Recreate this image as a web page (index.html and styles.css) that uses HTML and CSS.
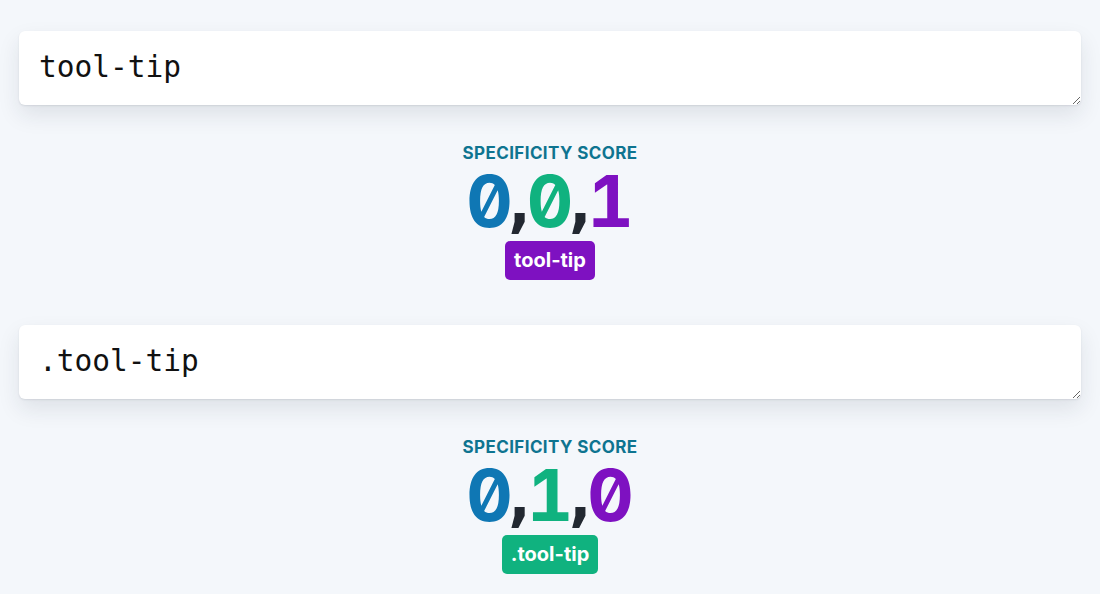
FILE: index.html
```html
<!DOCTYPE html>
<html lang="en">
<head>
    <meta charset="UTF-8">
    <meta name="viewport" content="width=device-width, initial-scale=1.0">
    <title>Specificity Calculator</title>
    <link rel="stylesheet" href="styles.css">
</head>
<body>

    <!-- Eerste selector -->
    <div class="selector-block">
        <textarea class="selector-input" spellcheck="false">tool-tip</textarea>
        <div class="result">
            <div class="result-label">Specificity score</div>
            <div class="score">
                <span class="digit ids">0</span><span class="comma">,</span><span class="digit classes">0</span><span class="comma">,</span><span class="digit elements">1</span>
            </div>
            <span class="badge badge-element">tool-tip</span>
        </div>
    </div>

    <!-- Tweede selector -->
    <div class="selector-block">
        <textarea class="selector-input" spellcheck="false">.tool-tip</textarea>
        <div class="result">
            <div class="result-label">Specificity score</div>
            <div class="score">
                <span class="digit ids">0</span><span class="comma">,</span><span class="digit classes">1</span><span class="comma">,</span><span class="digit elements">0</span>
            </div>
            <span class="badge badge-class">.tool-tip</span>
        </div>
    </div>

</body>
</html>
```

FILE: styles.css
```css
body {
    margin: 0;
    padding: 31px 19px 0 19px;
    background-color: #f4f7fb;
    font-family: Inter, "Noto Sans", sans-serif;
}

.selector-block {
    display: flex;
    flex-direction: column;
    align-items: stretch;
    margin-bottom: 45px;
}

.selector-input {
    display: block;
    box-sizing: border-box;
    width: 100%;
    height: 74px;
    padding: 18px 20px;
    border: none;
    border-radius: 6px;
    background-color: #ffffff;
    box-shadow: 0 10px 22px rgba(30, 41, 59, 0.10), 0 1px 2px rgba(30, 41, 59, 0.10);
    font-family: "DejaVu Sans Mono", "Liberation Mono", monospace;
    font-size: 29.5px;
    line-height: 36px;
    color: #111111;
    outline: none;
    resize: vertical;
}

/* Resultaat onder elk invoerveld */
.result {
    display: flex;
    flex-direction: column;
    align-items: center;
    margin-top: 38px;
}

.result-label {
    font-size: 17px;
    line-height: 20px;
    font-weight: 700;
    letter-spacing: 0.4px;
    text-transform: uppercase;
    color: #0e7490;
}

.score {
    display: flex;
    justify-content: center;
    font-weight: 700;
    font-size: 72px;
    line-height: 75px;
}

.digit {
    font-family: Inter, sans-serif;
    font-feature-settings: "zero" 1, "tnum" 1;
}

.ids {
    color: #0f77b4;
}

.classes {
    color: #10b27f;
}

.elements {
    color: #7e11c1;
}

/* Komma smal houden zodat de cijfers dicht bij elkaar staan */
.comma {
    display: flex;
    justify-content: center;
    width: 14px;
    padding-top: 5px;
    font-family: "DejaVu Sans Mono", monospace;
    font-size: 66px;
    line-height: 70px;
    color: #222831;
}

.badge {
    display: inline-block;
    margin-top: 3px;
    padding: 0 9px;
    height: 39px;
    line-height: 39px;
    border-radius: 5px;
    font-size: 20px;
    font-weight: 700;
    color: #ffffff;
}

.badge-element {
    background-color: #7e11c1;
}

.badge-class {
    background-color: #10b27f;
}
```
